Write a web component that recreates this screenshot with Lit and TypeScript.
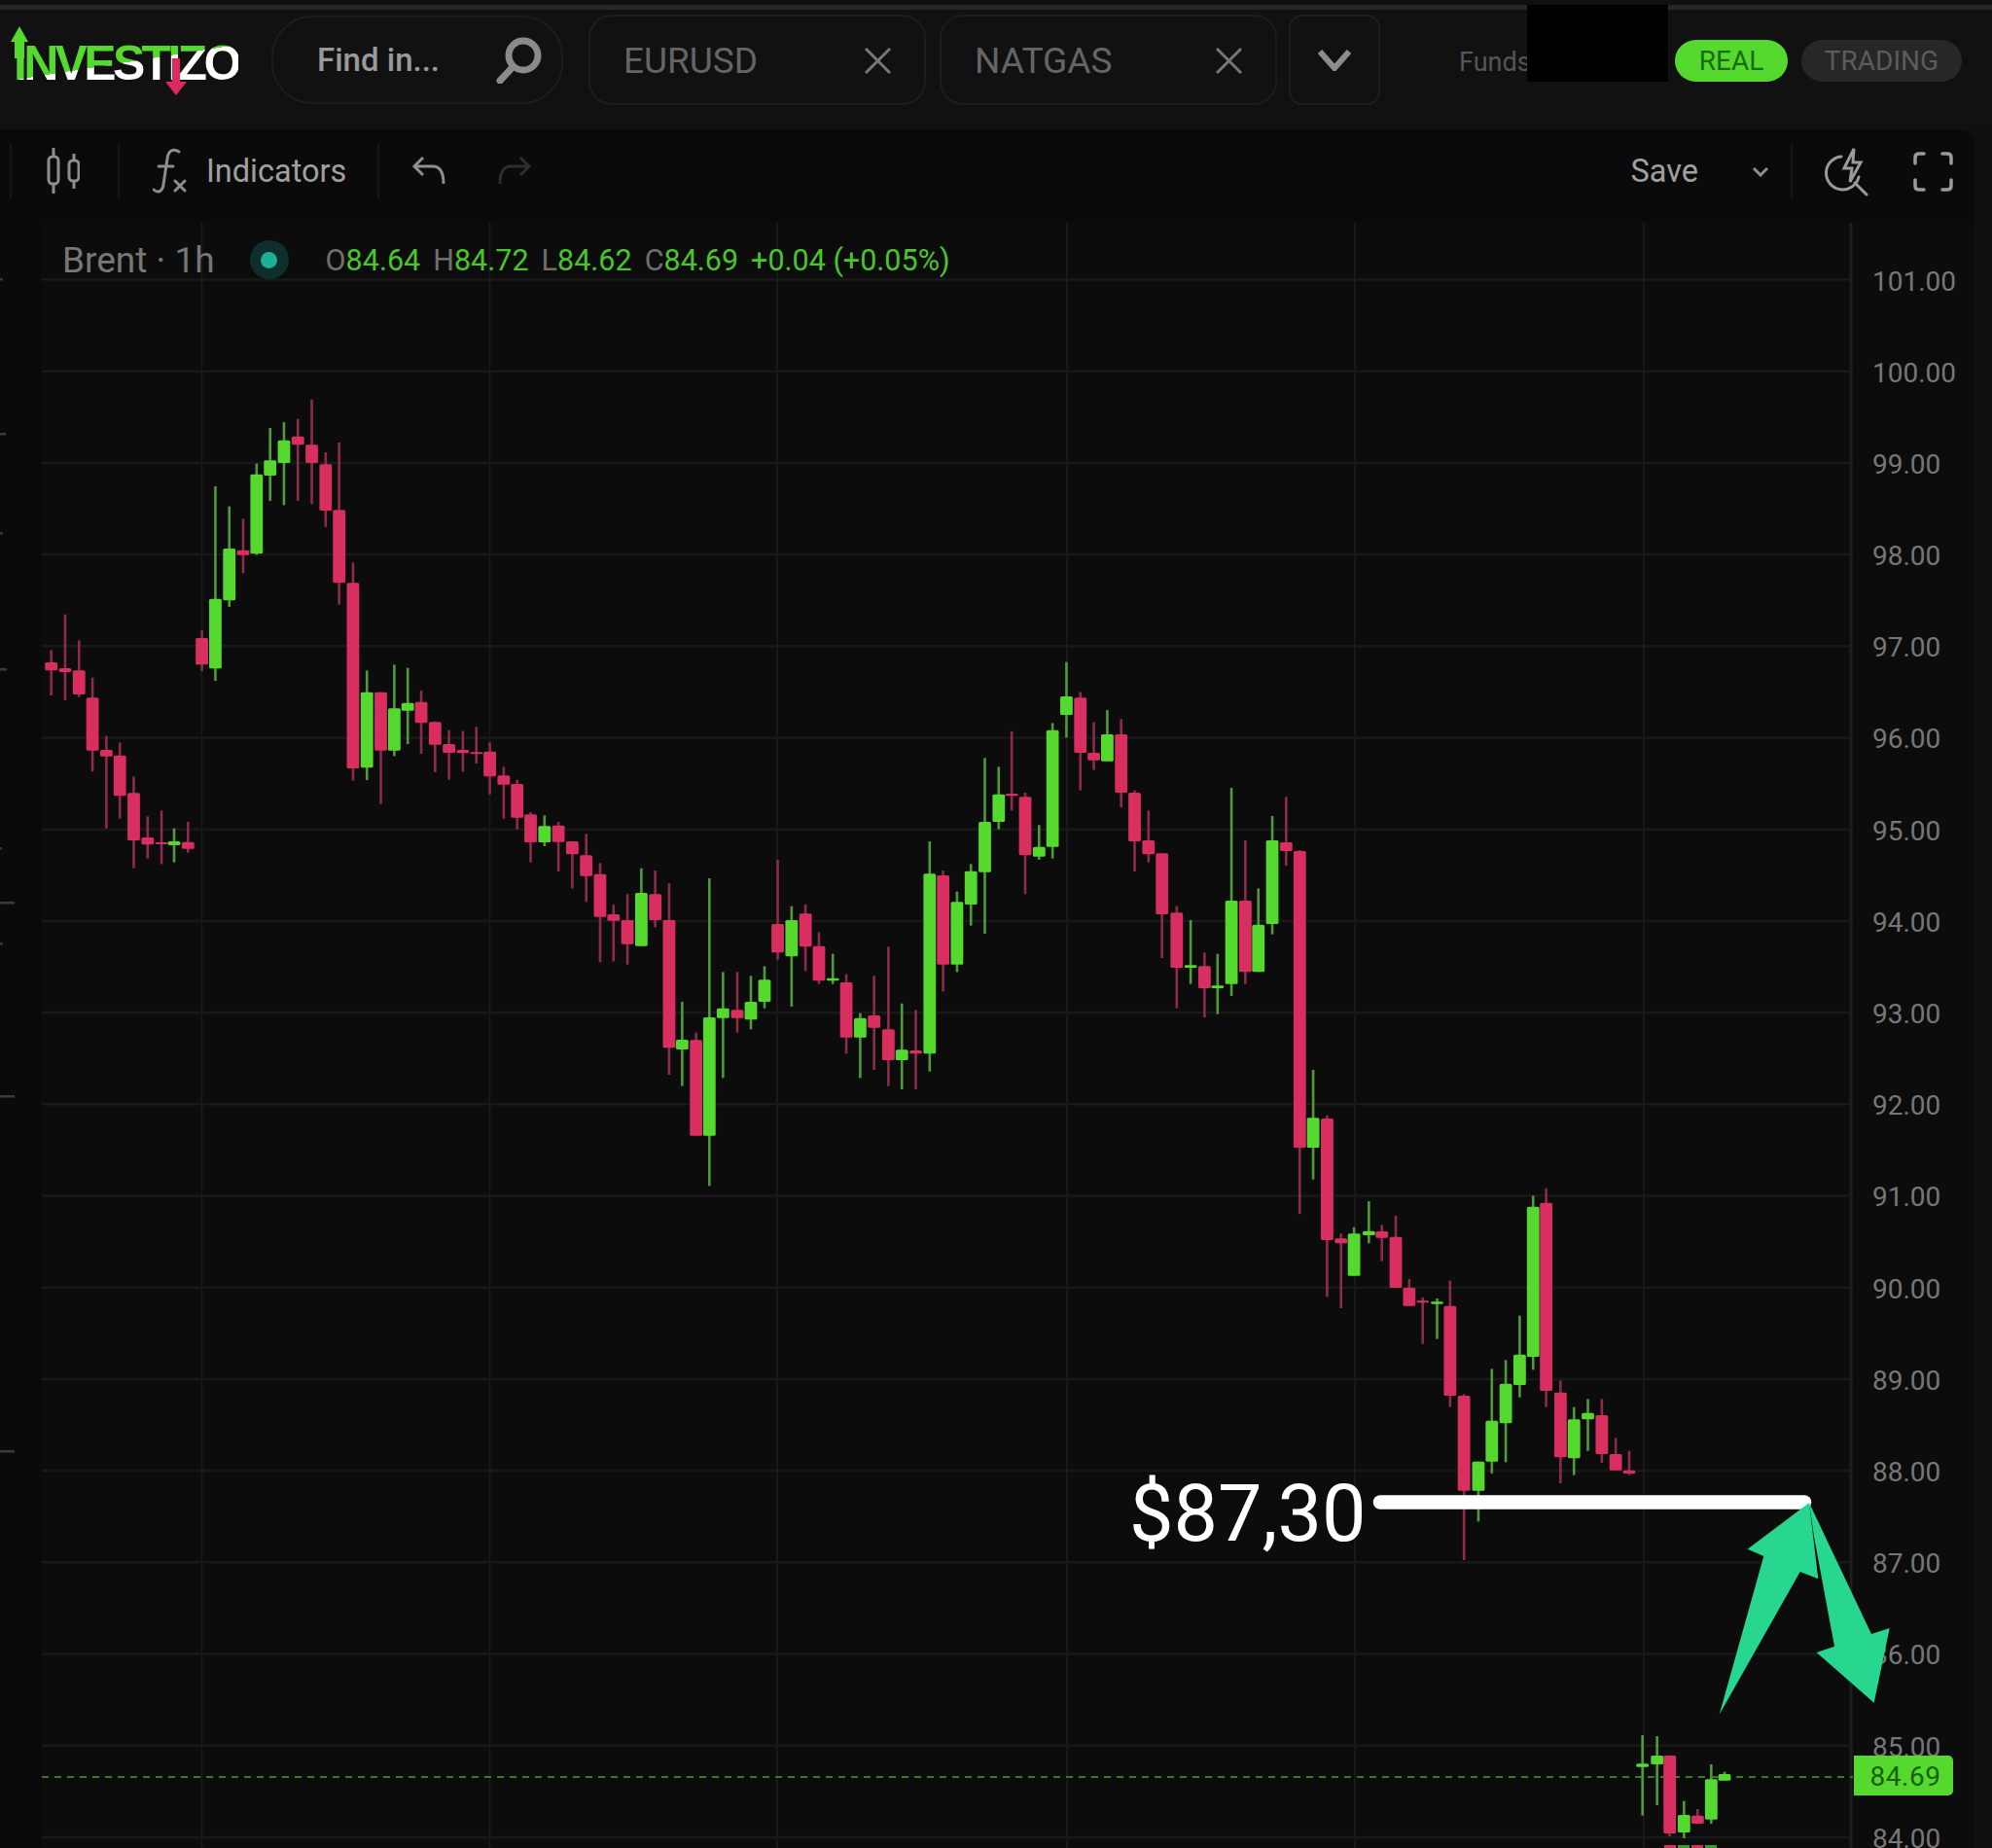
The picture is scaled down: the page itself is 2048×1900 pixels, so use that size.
import { LitElement, html, css, svg } from "lit";
import { customElement } from "lit/decorators.js";

type Raw = [number, number, number, number, number, 0 | 1];
interface Seg { ox: number; oy: number; xs: number; ys: number; c: Raw[] }

// Candles measured as [x, wickTop, bodyTop, bodyBottom, wickBottom, isRed]
const SEGS: Seg[] = [
  { ox: 0, oy: 400, xs: 2.24, ys: 3, c: [
    [118,805,843,868,945,1],[150,695,861,873,960,1],[182,775,868,942,950,1],[213,890,952,1115,1180,1],
    [245,1070,1113,1133,1355,1],[276,1090,1130,1255,1325,1],[308,1195,1246,1392,1478,1],[340,1318,1383,1405,1448,1],
    [372,1300,1398,1403,1465,1],[401,1355,1395,1407,1460,0],[433,1335,1397,1418,1430,1],[465,745,768,850,870,1],
    [496,300,647,862,900,0],[528,362,492,652,672,0],[560,400,497,512,568,1],[591,230,263,508,512,0],
    [622,120,220,267,345,0],[654,102,158,228,358,0],[686,92,146,172,345,1],[718,32,172,228,355,1],
    [750,195,232,375,425,1],[781,165,373,598,665,1],[813,535,598,1170,1208,1],[845,868,935,1168,1206,0],
    [877,935,935,1115,1280,1],[908,850,985,1115,1132,0],[939,860,968,992,1095,0],[970,930,965,1030,1125,1],
    [1002,1025,1027,1097,1182,1],[1034,1052,1095,1122,1205,1],[1066,1055,1113,1123,1180,1],[1097,1042,1120,1126,1155,1],
    [1128,1090,1118,1195,1250,1],[1160,1165,1192,1220,1325,1],[1191,1205,1218,1322,1358,1],[1222,1305,1312,1398,1460,1],
    [1254,1315,1348,1398,1410,0],[1286,1335,1346,1397,1488,1],[1318,1395,1395,1435,1540,1],[1350,1372,1438,1502,1582,1],
    [1382,1462,1496,1628,1768,1],[1413,1590,1620,1640,1765,1],[1445,1558,1638,1712,1775,1],[1477,1478,1554,1718,1718,0],
    [1509,1485,1558,1638,1660,1],[1541,1525,1638,2032,2115,1],
  ]},
  { ox: 660, oy: 980, xs: 3, ys: 3, c: [
    [124,150,267,297,410,0],[167,245,268,563,563,1],[208,-231,198,563,718,0],[250,58,170,200,385,0],
    [294,58,175,200,245,1],[336,70,150,205,235,0],[378,40,82,150,170,0],
  ]},
  { ox: 700, oy: 660, xs: 2.24, ys: 3, c: [
    [223,672,870,958,980,1],[255,815,858,970,1125,0],[287,810,838,940,1015,1],[318,895,938,1045,1055,1],
    [350,962,1037,1045,1055,0],[381,1025,1050,1220,1270,1],[413,1145,1160,1220,1345,0],[445,1030,1152,1190,1320,1],
    [478,940,1195,1290,1370,1],[509,1115,1258,1290,1380,0],[541,1135,1260,1270,1380,1],[573,615,715,1270,1325,0],
    [604,705,720,995,1078,1],[636,770,802,995,1018,0],[668,685,707,810,875,0],[700,358,555,710,900,0],
    [732,385,470,555,578,0],[762,275,468,475,520,1],[793,465,478,658,778,1],[825,565,632,662,672,0],
    [856,250,272,632,668,0],[888,62,168,225,295,0],[920,155,172,342,458,1],[951,248,342,365,395,1],
    [982,210,285,368,368,0],[1014,238,285,465,510,1],[1045,458,465,615,708,1],[1077,520,612,655,680,1],
    [1108,652,652,840,975,1],[1142,815,835,1005,1130,1],[1174,858,997,1005,1055,0],[1206,958,1000,1068,1158,1],
    [1236,962,1060,1068,1148,0],[1268,450,798,1055,1092,0],[1300,612,798,1018,1055,1],[1330,760,872,1018,1018,0],
    [1362,537,612,870,902,0],[1394,478,618,645,690,1],
  ]},
  { ox: 1300, oy: 1100, xs: 2.096, ys: 3, c: [
    [76,-678,-675,240,445,1],[105,0,148,240,338,0],[135,140,150,525,700,1],[165,505,520,535,735,1],
    [193,485,505,635,635,0],[225,405,497,510,535,0],[253,478,498,518,590,1],[283,450,515,672,672,1],
    [312,645,672,728,728,1],[341,702,712,716,845,1],[372,705,715,722,830,0],[400,650,728,1005,1040,1],
    [430,1000,1005,1298,1512,1],[461,1208,1208,1298,1393,0],[490,922,1082,1208,1245,0],[520,895,968,1090,1210,0],
    [550,758,878,972,1010,0],[579,388,422,885,925,0],[607,365,410,990,1040,1],[638,958,995,1195,1275,1],
    [667,1040,1078,1198,1250,0],[697,1015,1058,1078,1175,0],[727,1015,1065,1185,1212,1],[757,1135,1185,1235,1235,1],
    [786,1175,1235,1245,1250,1],
  ]},
  { ox: 1600, oy: 1500, xs: 3, ys: 3, c: [
    [266,852,940,950,1100,0],[311,855,915,942,1068,0],[350,915,915,1155,1165,1],[394,1055,1098,1152,1170,0],
    [436,1080,1100,1125,1125,1],[478,942,988,1112,1125,0],[519,965,972,992,992,0],
  ]},
];

const CANDLES = SEGS.flatMap((s) =>
  s.c.map(([x, wt, bt, bb, wb, red]) => ({
    x: s.ox + x / s.xs,
    wt: s.oy + wt / s.ys,
    bt: s.oy + bt / s.ys,
    bb: s.oy + bb / s.ys,
    wb: s.oy + wb / s.ys,
    red: !!red,
  }))
);

const PRICES = Array.from({ length: 18 }, (_, i) => 101 - i);
const gridY = (p: number) => 287.5 + (101 - p) * 94.2;
const V_GRID = [207.5, 503.5, 799, 1097, 1393, 1690];
const TICKS: [number, number][] = [[928, 15], [1127, 15], [1492, 15], [287, 3], [446, 6], [548, 3], [688, 7], [872, 2], [970, 3]];

@customElement("app-root")
export class AppRoot extends LitElement {
  static styles = css`
    :host { display: block; width: 2048px; height: 1900px; overflow: hidden; background: #101010; font-family: Roboto, "Liberation Sans", sans-serif; position: relative; }
    .stripe { height: 10px; box-sizing: border-box; background: #101010; border-bottom: 5px solid #272727; }
    header { height: 123px; box-sizing: border-box; padding: 5px 0 25px; display: flex; align-items: center; background: #111; position: relative; }
    .logo { width: 279px; height: 93px; position: relative; flex: none; }
    .logo-text { position: absolute; left: 14px; top: 25px; height: 50px; font: 700 50px/50px "Liberation Sans", sans-serif; letter-spacing: -3.7px; white-space: nowrap;
      background: linear-gradient(171deg, #55d92f 49%, #fff 49%); -webkit-background-clip: text; background-clip: text; color: transparent; }
    .logo-marks { position: absolute; left: 0; top: 0; }
    .search { width: 300px; height: 91px; box-sizing: border-box; border: 2px solid #1d1d1d; border-radius: 42px; display: flex; align-items: center; justify-content: space-between; padding: 0 19px 0 45px; margin-right: 26px; color: #9a9a9a; font-size: 33px; font-weight: 500; flex: none; }
    .tab { height: 93px; box-sizing: border-box; border: 2px solid #1d1d1d; border-radius: 24px; display: flex; align-items: center; justify-content: space-between; padding: 2px 34px 0 34px; color: #656565; font-size: 37px; flex: none; width: 347px; }
    .tab.a { margin-right: 14px; }
    .tab.b { margin-right: 12px; }
    .more { width: 94px; height: 93px; box-sizing: border-box; border: 2px solid #1d1d1d; border-radius: 14px; display: flex; align-items: center; justify-content: center; flex: none; }
    .funds { margin-left: 81px; width: 222px; color: #555; font-size: 27px; flex: none; margin-top: 4px; }
    .pill { height: 43px; border-radius: 22px; display: flex; align-items: center; justify-content: center; font-size: 28px; flex: none; margin-top: 2px; }
    .pill.real { width: 116px; background: #55d92f; color: #1a6a12; margin-right: 14px; }
    .pill.trading { width: 165px; background: #272727; color: #5c5c5c; }
    .redact { position: absolute; left: 1570px; top: -5px; width: 145px; height: 79px; background: #000; }
    .toolbar { height: 96px; box-sizing: border-box; padding-bottom: 10px; margin-right: 18px; background: #0a0a0a; border-radius: 0 16px 0 0; display: flex; align-items: center; color: #a0a0a0; font-size: 32.5px; }
    .div { width: 2px; height: 56px; background: #161616; flex: none; }
    .toolbar svg { flex: none; display: block; }
    .ml10 { margin-left: 10px; }
    .spacer { flex: 1; }
    .ic-candle { margin-left: 34px; }
    .div-a { margin-left: 39px; }
    .ic-fx { margin-left: 34px; }
    .lbl { margin-left: 19px; }
    .div-b { margin-left: 32px; }
    .ic-undo { margin-left: 33px; }
    .ic-redo { margin-left: 53px; }
    .ic-chev { margin-left: 55px; }
    .div-c { margin-left: 22px; }
    .ic-bolt { margin-left: 30px; }
    .ic-full { margin-left: 46px; margin-right: 22px; }
    .chart { height: 1671px; display: flex; position: relative; }
    .plot { display: block; width: 1905px; height: 1671px; flex: none; filter: blur(0.5px); }
    .axis { width: 125px; flex: none; background: #0c0c0c; height: 1671px; box-sizing: border-box; overflow: hidden; padding: 51.5px 0 0 20px; color: #777; font-size: 28px; }
    .axis div { height: 18px; line-height: 18px; margin-bottom: 76.2px; }
    .tag { position: absolute; left: 1906px; top: 1576px; width: 102px; height: 41px; box-sizing: border-box; padding: 1px 0 0 4px; background: #55d92f; color: #17610f; border-radius: 0 5px 5px 0; font-size: 28px; display: flex; align-items: center; justify-content: center; letter-spacing: 0.5px; }
    .legend { position: absolute; left: 64px; top: 18px; height: 40px; display: flex; align-items: center; color: #777; font-size: 37px; white-space: nowrap; }
    .halo { width: 40px; height: 40px; border-radius: 50%; background: #0f2f2c; display: flex; align-items: center; justify-content: center; margin: 0 38px 0 36px; }
    .halo i { display: block; width: 17px; height: 17px; border-radius: 50%; background: #1fae96; }
    .ohlc { display: flex; gap: 13px; font-size: 30.5px; color: #6f6f6f; }
    .ohlc b { font-weight: 400; color: #4bc52c; }
    .over { position: absolute; left: 0; top: 0; width: 2048px; height: 1671px; pointer-events: none; }
    .price { font: 400 81px Roboto, sans-serif; fill: #fff; }
  `;

  private x(size = 27, color = "#777") {
    return html`<svg width=${size} height=${size} viewBox="0 0 27 27" fill="none" stroke=${color} stroke-width="3"><path d="M1 1L26 26M26 1L1 26" /></svg>`;
  }

  render() {
    return html`
      <div class="stripe"></div>
      <header>
        <div class="logo">
          <span class="logo-text">INVESTIZO</span>
          <svg class="logo-marks" width="279" height="93" viewBox="0 15 279 93">
            <path d="M20 27L29 43H25V60H15V43H11Z" fill="#55d92f" />
            <path d="M177 60H185V84H192L181 98L170 84H177Z" fill="#dd2a5e" />
          </svg>
        </div>
        <div class="search">
          <span>Find in...</span>
          <svg width="48" height="48" viewBox="0 0 48 48" fill="none" stroke="#8a8a8a" stroke-width="7"><circle cx="28" cy="19" r="15" /><path d="M17 31L4 45" stroke-linecap="round" /></svg>
        </div>
        <div class="tab a"><span>EURUSD</span>${this.x()}</div>
        <div class="tab b"><span>NATGAS</span>${this.x()}</div>
        <div class="more"><svg width="34" height="22" viewBox="0 0 34 22" fill="none" stroke="#8c8c8c" stroke-width="6"><path d="M2 2L17 19L32 2" /></svg></div>
        <div class="funds">Funds</div>
        <div class="pill real">REAL</div>
        <div class="pill trading">TRADING</div>
        <div class="redact"></div>
      </header>
      <div class="toolbar">
        <div class="div ml10"></div>
        <svg class="ic-candle" width="36" height="50" viewBox="48 152 36 50" fill="none" stroke="#8e8e8e" stroke-width="3"><rect x="52" y="162" width="10" height="28" rx="4" /><path d="M57 153V162M57 190V200M78 159V166M78 187V195" /><rect x="73" y="166" width="10" height="21" rx="4" /></svg>
        <div class="div div-a"></div>
        <svg class="ic-fx" width="36" height="50" viewBox="155 152 36 50" fill="none" stroke="#8e8e8e" stroke-width="3" stroke-linecap="round"><path d="M182 157C176 153 171 156 170 164L166 191C165 198 160 200 156 196M161 172H176M178 187L188 197M188 187L178 197" /></svg>
        <span class="lbl">Indicators</span>
        <div class="div div-b"></div>
        <svg class="ic-undo" width="36" height="34" viewBox="426 162 36 34" fill="none" stroke="#8e8e8e" stroke-width="3"><path d="M438 165L429 174L438 183M429 174H448C455 174 459 180 459 192" /></svg>
        <svg class="ic-redo" width="36" height="34" viewBox="514 162 36 34" fill="none" stroke="#2e2e2e" stroke-width="3"><path d="M537 165L546 174L537 183M546 174H527C520 174 516 180 516 192" /></svg>
        <div class="spacer"></div>
        <span>Save</span>
        <svg class="ic-chev" width="18" height="11" viewBox="0 0 18 11" fill="none" stroke="#8e8e8e" stroke-width="3"><path d="M2 2L9 9L16 2" /></svg>
        <div class="div div-c"></div>
        <svg class="ic-bolt" width="48" height="54" viewBox="874 148 48 54" fill="none" stroke="#9a9a9a" stroke-width="3"><path d="M894 160A17 17 0 1 0 912 181M908 187L920 199" stroke-linecap="round" /><path d="M907 152L897 172H905L903 186L914 166H906Z" /></svg>
        <svg class="ic-full" width="41" height="41" viewBox="0 0 41 41" fill="none" stroke="#9a9a9a" stroke-width="3.5" stroke-linecap="round"><path d="M2 12V6Q2 2 6 2H11M30 2H35Q39 2 39 6V12M39 29V35Q39 39 35 39H30M11 39H6Q2 39 2 35V29" /></svg>
      </div>
      <div class="chart">
        <svg class="plot" viewBox="0 229 1905 1671">
          <rect x="0" y="229" width="43" height="1671" fill="#0a0a0a" />
          <rect x="43" y="229" width="1862" height="1671" fill="#0c0c0c" />
          ${TICKS.map(([y, w]) => svg`<rect x="0" y=${y - 1} width=${w} height="2.5" fill="#3a3a3a" />`)}
          ${PRICES.map((p) => svg`<line x1="43" x2="1905" y1=${gridY(p)} y2=${gridY(p)} stroke="#191919" stroke-width="2.5" />`)}
          ${V_GRID.map((x) => svg`<line x1=${x} x2=${x} y1="229" y2="1900" stroke="#191919" stroke-width="2" />`)}
          <line x1="1903" x2="1903" y1="229" y2="1900" stroke="#1e1e1e" stroke-width="3" />
          <line x1="43" x2="1905" y1="1827" y2="1827" stroke="#3b7a28" stroke-width="2" stroke-dasharray="7 6" />
          ${CANDLES.map((c) => {
            const col = c.red ? "#d92f60" : "#55d92f";
            const wick = c.red ? "#8e2b4c" : "#4f9a3c";
            return svg`
              <line x1=${c.x} x2=${c.x} y1=${c.wt} y2=${c.wb} stroke=${wick} stroke-width="2.6" />
              <rect x=${c.x - 6.4} y=${c.bt} width="12.8" height=${Math.max(c.bb - c.bt, 2)} rx="1.5" fill=${col} />`;
          })}
          <rect x="1711" y="1897" width="12" height="3" fill="#d92f60" />
          <rect x="1725" y="1897" width="12" height="3" fill="#3d9a2a" />
          <rect x="1739" y="1897" width="12" height="3" fill="#d92f60" />
          <rect x="1753" y="1897" width="12" height="3" fill="#3d9a2a" />
        </svg>
        <div class="axis">
          ${PRICES.map((p) => html`<div>${p.toFixed(2)}</div>`)}
        </div>
        <div class="tag">84.69</div>
        <div class="legend">
          <span>Brent · 1h</span>
          <span class="halo"><i></i></span>
          <span class="ohlc">
            <span>O<b>84.64</b></span>
            <span>H<b>84.72</b></span>
            <span>L<b>84.62</b></span>
            <span>C<b>84.69</b></span>
            <span><b>+0.04 (+0.05%)</b></span>
          </span>
        </div>
        <svg class="over" viewBox="0 229 2048 1671">
          <text class="price" x="1161" y="1584">$87,30</text>
          <line x1="1419" x2="1855" y1="1544.5" y2="1544.5" stroke="#fff" stroke-width="14.5" stroke-linecap="round" />
          <polygon fill="#27d68f" points="1860,1545 1869.3,1623.3 1850.7,1616 1767.7,1762.7 1813.3,1600 1796.7,1592.7" />
          <polygon fill="#27d68f" points="1860,1545 1924,1680 1942.7,1674 1926.7,1750.7 1867.7,1699 1886,1692.7 1865,1580" />
        </svg>
      </div>
    `;
  }
}
